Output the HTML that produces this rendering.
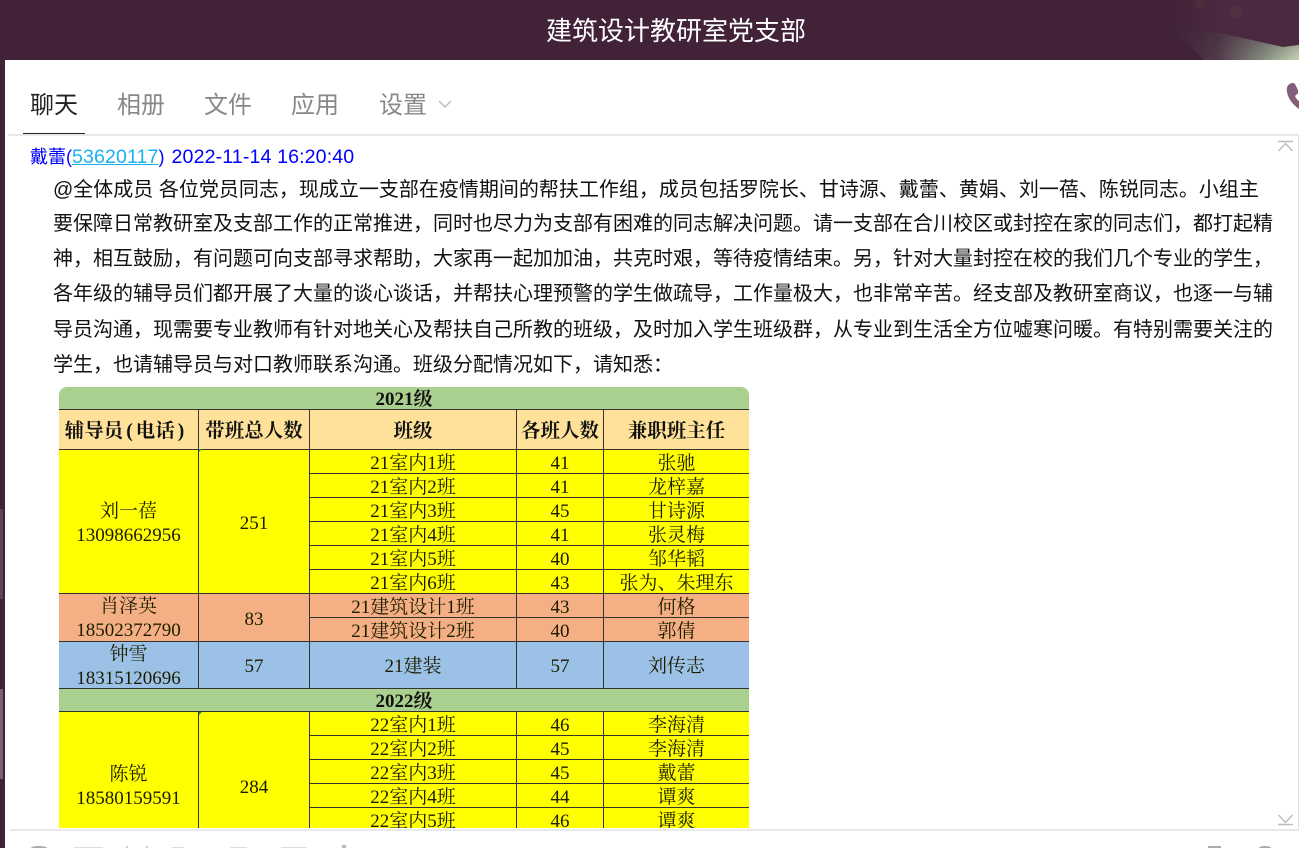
<!DOCTYPE html>
<html lang="zh-CN">
<head>
<meta charset="utf-8">
<title>建筑设计教研室党支部</title>
<style>
*{box-sizing:border-box}
html,body{margin:0;padding:0;width:1299px;height:848px;overflow:hidden;background:#412239}
body{position:relative;font-family:"Liberation Sans","Noto Sans CJK SC",sans-serif}
.abs{position:absolute}
.title{left:0;top:11px;width:1352px;text-align:center;color:#fff;font-size:26px;line-height:40px;white-space:nowrap}
.panel{left:5px;top:60px;width:1294px;height:788px;background:#fff}
.tab{top:87px;font-size:24px;line-height:38px;color:#888;white-space:nowrap}
.line{left:53px;font-size:20px;line-height:30px;color:#111;white-space:nowrap}
.meta{left:30px;top:144px;line-height:26px;color:#0000ff;white-space:nowrap;font-size:18px}
.meta span{font-size:19.6px;letter-spacing:.12px;margin-left:2px}
.meta u{color:#1ab0ee;font-size:19.6px;letter-spacing:.1px}
.wrap{left:59px;top:387px;width:690px;height:441px;overflow:hidden;border-radius:8px 8px 0 0}
table{border-collapse:collapse;table-layout:fixed;width:690px;font-family:"Liberation Serif","Noto Serif CJK SC",serif;font-size:19px;color:#1c1c00}
td{padding:5px 0 0;border:1px solid #333;text-align:center;line-height:18px;overflow:hidden;white-space:nowrap;vertical-align:middle}
tr>td:first-child{border-left:0}
tr>td:last-child{border-right:0}
.g td{background:#a9d08e;font-weight:bold;line-height:16px;padding-top:5px;color:#111}
.h td{background:#ffe199;font-weight:bold;color:#111;font-size:19.5px}
.h i{font-style:normal;padding:0 3px}
.y td{background:#ffff00}
.o td{background:#f4b084}
.b td{background:#9bc2e6}
.r24{height:24px}
td.k{padding-top:0;vertical-align:top}
td.m{padding-top:0}
.t{height:44px;line-height:24px;position:relative}
.t2{height:48px;line-height:24px;position:relative}
</style>
</head>
<body>
<svg class="abs" style="left:1160px;top:0" width="139" height="60" viewBox="0 0 139 60">
<defs>
<linearGradient id="sh" x1="0" y1="0" x2="1" y2="0">
<stop offset="0" stop-color="#412239"/>
<stop offset=".35" stop-color="#4f3a4a"/>
<stop offset=".7" stop-color="#838a7d"/>
<stop offset="1" stop-color="#c3d6b4"/>
</linearGradient>
<linearGradient id="fade" x1="0" y1="0" x2="0" y2="1">
<stop offset="0" stop-color="#412239" stop-opacity=".5"/>
<stop offset="1" stop-color="#412239" stop-opacity="0"/>
</linearGradient>
<linearGradient id="tint" x1="0" y1="0" x2="1" y2="0">
<stop offset="0" stop-color="#4a2a40" stop-opacity="0"/>
<stop offset=".4" stop-color="#4a2a40"/>
<stop offset="1" stop-color="#4a2a40"/>
</linearGradient>
</defs>
<polygon points="10,0 139,0 139,45 123,47 60,33 12,28" fill="url(#tint)"/>
<circle cx="76" cy="12" r="6" fill="#5a4040" opacity=".35"/>
<circle cx="40" cy="4" r="5" fill="#5a4040" opacity=".3"/>
<polygon points="12,28 60,33 123,47 139,45 139,60 44,60" fill="url(#sh)"/>
<polygon points="12,28 60,33 123,47 139,45 139,60 44,60" fill="url(#fade)"/>
</svg>
<div class="abs title">建筑设计教研室党支部</div>
<div class="abs panel"></div>

<div class="abs tab" style="left:30px;color:#222">聊天</div>
<div class="abs tab" style="left:117px">相册</div>
<div class="abs tab" style="left:204px">文件</div>
<div class="abs tab" style="left:291px">应用</div>
<div class="abs tab" style="left:379px">设置</div>
<svg class="abs" style="left:437px;top:99px" width="16" height="10" viewBox="0 0 16 10"><path d="M2 2l6 6 6-6" fill="none" stroke="#bbb" stroke-width="1.4"/></svg>
<div class="abs" style="left:23px;top:133px;width:62px;height:1px;background:#222"></div>
<div class="abs" style="left:8px;top:134px;width:1291px;height:2px;background:#e9e9e9"></div>

<svg class="abs" style="left:1285px;top:81px" width="14" height="30" viewBox="0 0 14 30"><path d="M7 2C3 3 1 6 2 11c1 6 5 12 12 17v-8c-2-1-3-3-4-5l3-3V9L10 3C9 2 8 2 7 2z" fill="#845d7a"/></svg>

<div class="abs" style="left:1298px;top:136px;width:1px;height:694px;background:#e2e2e2"></div>
<svg class="abs" style="left:1277px;top:140px" width="17" height="12" viewBox="0 0 17 12"><path d="M1 1.5h15M1.5 11L8.5 3.5 15.5 11" fill="none" stroke="#bbb" stroke-width="1.4"/></svg>
<svg class="abs" style="left:1277px;top:814px" width="17" height="12" viewBox="0 0 17 12"><path d="M1 10.5h15M1.5 1L8.5 8.5 15.5 1" fill="none" stroke="#bbb" stroke-width="1.4"/></svg>

<div class="abs meta">戴蕾(<u>53620117</u>) <span>2022-11-14 16:20:40</span></div>

<div class="abs line" style="top:175px">@全体成员 各位党员同志，现成立一支部在疫情期间的帮扶工作组，成员包括罗院长、甘诗源、戴蕾、黄娟、刘一蓓、陈锐同志。小组主</div>
<div class="abs line" style="top:209px">要保障日常教研室及支部工作的正常推进，同时也尽力为支部有困难的同志解决问题。请一支部在合川校区或封控在家的同志们，都打起精</div>
<div class="abs line" style="top:244px">神，相互鼓励，有问题可向支部寻求帮助，大家再一起加加油，共克时艰，等待疫情结束。另，针对大量封控在校的我们几个专业的学生，</div>
<div class="abs line" style="top:279px">各年级的辅导员们都开展了大量的谈心谈话，并帮扶心理预警的学生做疏导，工作量极大，也非常辛苦。经支部及教研室商议，也逐一与辅</div>
<div class="abs line" style="top:315px">导员沟通，现需要专业教师有针对地关心及帮扶自己所教的班级，及时加入学生班级群，从专业到生活全方位嘘寒问暖。有特别需要关注的</div>
<div class="abs line" style="top:350px">学生，也请辅导员与对口教师联系沟通。班级分配情况如下，请知悉：</div>

<div class="abs wrap">
<table>
<colgroup><col style="width:139.5px"><col style="width:111px"><col style="width:207px"><col style="width:87px"><col style="width:145.5px"></colgroup>
<tr class="g" style="height:22px"><td colspan="5" style="border-top:0">2021级</td></tr>
<tr class="h" style="height:40px"><td style="padding-right:5px">辅导员<i>(</i>电话<i>)</i></td><td>带班总人数</td><td>班级</td><td>各班人数</td><td>兼职班主任</td></tr>
<tr class="y r24"><td rowspan="6" class="m"><div class="t2" style="top:3px">刘一蓓<br>13098662956</div></td><td rowspan="6">251</td><td>21室内1班</td><td>41</td><td>张驰</td></tr>
<tr class="y r24"><td>21室内2班</td><td>41</td><td>龙梓嘉</td></tr>
<tr class="y r24"><td>21室内3班</td><td>45</td><td>甘诗源</td></tr>
<tr class="y r24"><td>21室内4班</td><td>41</td><td>张灵梅</td></tr>
<tr class="y r24"><td>21室内5班</td><td>40</td><td>邹华韬</td></tr>
<tr class="y r24"><td>21室内6班</td><td>43</td><td>张为、朱理东</td></tr>
<tr class="o r24"><td rowspan="2" class="k"><div class="t" style="top:1px">肖泽英<br>18502372790</div></td><td rowspan="2">83</td><td>21建筑设计1班</td><td>43</td><td>何格</td></tr>
<tr class="o r24"><td>21建筑设计2班</td><td>40</td><td>郭倩</td></tr>
<tr class="b" style="height:47px"><td class="k"><div class="t" style="top:1px">钟雪<br>18315120696</div></td><td>57</td><td>21建装</td><td>57</td><td>刘传志</td></tr>
<tr class="g" style="height:23px"><td colspan="5">2022级</td></tr>
<tr class="y r24"><td rowspan="6" class="m"><div class="t2" style="top:4px">陈锐<br>18580159591</div></td><td rowspan="6"><div style="position:relative;top:2px">284</div></td><td>22室内1班</td><td>46</td><td>李海清</td></tr>
<tr class="y r24"><td>22室内2班</td><td>45</td><td>李海清</td></tr>
<tr class="y r24"><td>22室内3班</td><td>45</td><td>戴蕾</td></tr>
<tr class="y r24"><td>22室内4班</td><td>44</td><td>谭爽</td></tr>
<tr class="y r24"><td>22室内5班</td><td>46</td><td>谭爽</td></tr>
<tr class="y r24"><td>22室内6班</td><td>45</td><td>谭爽</td></tr>
</table>
<div class="abs" style="left:140px;top:62px;width:0;height:0;border-top:3px solid #2a9a2a;border-right:3px solid transparent"></div>
<div class="abs" style="left:140px;top:325px;width:0;height:0;border-top:3px solid #2a9a2a;border-right:3px solid transparent"></div>
</div>

<div class="abs" style="left:10px;top:829px;width:1289px;height:2px;background:#e9e9e9"></div>

<div class="abs" style="left:0;top:509px;width:3px;height:90px;background:#5f4459"></div>
<div class="abs" style="left:0;top:689px;width:3px;height:90px;background:#7a6075"></div>

<svg class="abs" style="left:0;top:845px" width="1299" height="3" viewBox="0 0 1299 3" fill="#aaa">
<ellipse cx="39" cy="3" rx="8" ry="2"/>
<rect x="74" y="2" width="29" height="1" fill="#ddd"/>
<rect x="126" y="1" width="2" height="2" fill="#ccc"/>
<rect x="146" y="1" width="2" height="2" fill="#ccc"/>
<rect x="172" y="2" width="12" height="1" fill="#ddd"/>
<rect x="230" y="2" width="17" height="1" fill="#ddd"/>
<rect x="281" y="2" width="26" height="1" fill="#ddd"/>
<rect x="342" y="0" width="4" height="3" fill="#bbb"/>
<rect x="1208" y="1" width="13" height="2"/>
<ellipse cx="1265" cy="3" rx="6" ry="2"/>
</svg>
</body>
</html>
